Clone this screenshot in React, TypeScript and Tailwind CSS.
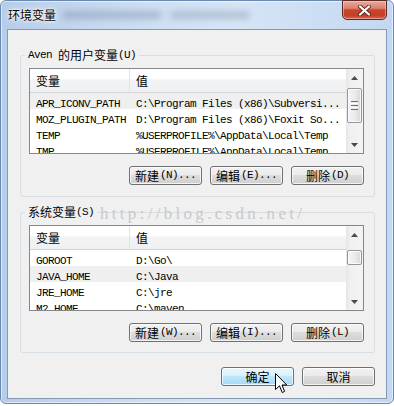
import React from "react";

const MONO = "font-['Liberation_Mono',monospace] text-[11px] tracking-[-0.6px]";
const CJK = "font-['Noto_Sans_CJK_SC',sans-serif] text-[12px]";

type Row = { name: string; value: string; hl?: boolean };

const userRows: Row[] = [
  { name: "APR_ICONV_PATH", value: "C:\\Program Files (x86)\\Subversi...", hl: true },
  { name: "MOZ_PLUGIN_PATH", value: "D:\\Program Files (x86)\\Foxit So..." },
  { name: "TEMP", value: "%USERPROFILE%\\AppData\\Local\\Temp" },
  { name: "TMP", value: "%USERPROFILE%\\AppData\\Local\\Temp" },
];

const sysRows: Row[] = [
  { name: "GOROOT", value: "D:\\Go\\" },
  { name: "JAVA_HOME", value: "C:\\Java", hl: true },
  { name: "JRE_HOME", value: "C:\\jre" },
  { name: "M2_HOME", value: "C:\\maven" },
];

function ScrollArrow({ down }: { down?: boolean }) {
  return (
    <div className="h-[17px] shrink-0 flex items-center justify-center">
      <svg width="7" height="4" viewBox="0 0 7 4">
        <polygon points={down ? "0,0 7,0 3.5,4" : "0,4 7,4 3.5,0"} fill="#4a4a4a" />
      </svg>
    </div>
  );
}

function Scrollbar({ thumbClass, grip }: { thumbClass: string; grip?: boolean }) {
  return (
    <div className="w-[17px] shrink-0 flex flex-col bg-[linear-gradient(to_right,#e6e6e6,#f0f0f0_25%,#f4f4f4)]">
      <ScrollArrow />
      <div className="flex-1 flex flex-col items-center">
        <div
          className={`${thumbClass} w-[15px] rounded-[2px] border border-[#979797] bg-[linear-gradient(to_right,#f5f5f5,#ebebeb_50%,#d8d8d8)] shadow-[inset_0_0_0_1px_rgba(255,255,255,0.75)] flex flex-col items-center justify-center gap-[1px]`}
        >
          {grip && (
            <>
              <div className="w-[7px] h-[1px] bg-[#6f6f6f]" />
              <div className="w-[7px] h-[1px] bg-[#ffffff]" />
              <div className="w-[7px] h-[1px] bg-[#6f6f6f]" />
              <div className="w-[7px] h-[1px] bg-[#ffffff]" />
              <div className="w-[7px] h-[1px] bg-[#6f6f6f]" />
            </>
          )}
        </div>
      </div>
      <ScrollArrow down />
    </div>
  );
}

function List({ rows, thumbClass, grip }: { rows: Row[]; thumbClass: string; grip?: boolean }) {
  return (
    <div className="h-[86px] border border-[#828790] bg-white flex overflow-hidden text-black">
      <div className="flex-1 min-w-0 flex flex-col">
        <div className="h-[24px] shrink-0 flex border-b border-[#d5d5d5] bg-[linear-gradient(to_bottom,#ffffff_0%,#ffffff_45%,#f2f3f5_46%,#eff0f2_100%)]">
          <div className="w-[100px] border-r border-[#e3e3e3] pl-[6px] flex items-center">
            <span className={CJK}>变量</span>
          </div>
          <div className="flex-1 pl-[6px] flex items-center">
            <span className={CJK}>值</span>
          </div>
        </div>
        {rows.map((r) => (
          <div
            key={r.name}
            className={`h-[16px] shrink-0 flex items-center whitespace-nowrap ${r.hl ? "bg-[#efefef]" : ""}`}
          >
            <div className="w-[100px] pl-[6px] overflow-hidden">
              <span className={MONO}>{r.name}</span>
            </div>
            <div className="flex-1 pl-[6px] overflow-hidden">
              <span className={MONO}>{r.value}</span>
            </div>
          </div>
        ))}
      </div>
      <Scrollbar thumbClass={thumbClass} grip={grip} />
    </div>
  );
}

function Btn({ cjk, mono, primary }: { cjk: string; mono?: string; primary?: boolean }) {
  return (
    <button
      className={`h-[19px] w-[73px] rounded-[3px] border ${
        primary
          ? "border-[#3c7fb1] bg-[linear-gradient(to_bottom,#eaf6fd_0%,#d9f0fc_45%,#bee6fd_50%,#a7d9f5_100%)]"
          : "border-[#707070] bg-[linear-gradient(to_bottom,#f2f2f2_0%,#ebebeb_45%,#dddddd_50%,#cfcfcf_100%)]"
      } shadow-[inset_0_0_0_1px_rgba(255,255,255,0.75)] flex items-center justify-center text-black leading-none`}
    >
      <span className={CJK}>{cjk}</span>
      {mono && <span className={`${MONO} ml-[1px]`}>{mono}</span>}
    </button>
  );
}

function Legend({ latin, cjk, key2 }: { latin?: string; cjk: string; key2: string }) {
  return (
    <legend className="-ml-[4px] px-[3px] h-[14px] flex items-center text-black whitespace-pre">
      {latin && <span className={MONO}>{latin}</span>}
      <span className={CJK}>{cjk}</span>
      <span className={MONO}>{key2}</span>
    </legend>
  );
}

export default function App() {
  return (
    <div className="relative w-[394px] h-[406px] bg-white overflow-hidden">
      <div className="h-[404px] rounded-[6px] border border-[#6a89ae] bg-[linear-gradient(to_right,#b6cde9,#cfe0f4_40%,#d6e5f6_60%,#c3d8f0)] shadow-[inset_0_0_0_1px_rgba(255,255,255,0.55)] flex flex-col px-[6px] pb-[4px]">
        {/* Title bar */}
        <div className="h-[28px] shrink-0 flex items-start">
          <div className="h-[28px] pl-[1px] flex items-center">
            <span className={`${CJK} text-black [text-shadow:0_0_6px_#fff,0_0_3px_#fff,0_0_2px_#fff]`}>环境变量</span>
          </div>
          <div className="h-[28px] ml-[6px] flex items-center gap-[8px]">
            <div className="w-[100px] h-[8px] rounded-full bg-[#7f8ea3]/45 blur-[3px]" />
            <div className="w-[80px] h-[8px] rounded-full bg-[#7f8ea3]/40 blur-[3px]" />
          </div>
          <div className="flex-1" />
          <div className="-mt-[1px] w-[45px] h-[20px] rounded-b-[5px] border border-[#5d2a22] bg-[linear-gradient(to_bottom,#e9ab9f_0%,#dc8170_40%,#c8452b_50%,#c43f25_80%,#d46a50_100%)] shadow-[inset_0_0_0_1px_rgba(255,220,210,0.45)] flex items-center justify-center">
            <svg width="13" height="11" viewBox="0 0 13 11">
              <path d="M2 1.5 L11 9.5 M11 1.5 L2 9.5" stroke="#5a2a22" strokeWidth="4" strokeLinecap="round" />
              <path d="M2 1.5 L11 9.5 M11 1.5 L2 9.5" stroke="#ffffff" strokeWidth="2.2" strokeLinecap="round" />
            </svg>
          </div>
        </div>

        {/* Client area */}
        <div className="flex-1 border border-[#8599b3] bg-[#f0f0f0] pl-[12px] pr-[11px] flex flex-col">
          <fieldset className="mt-[18px] border border-[#d5dfe5] rounded-[3px] pl-[8px] pr-[10px] pt-[6px] pb-[11px]">
            <Legend latin="Aven " cjk="的用户变量" key2="(U)" />
            <List rows={userRows} thumbClass="mt-[2px] h-[35px]" grip />
            <div className="mt-[12px] flex justify-end gap-[8px]">
              <Btn cjk="新建" mono="(N)..." />
              <Btn cjk="编辑" mono="(E)..." />
              <Btn cjk="删除" mono="(D)" />
            </div>
          </fieldset>

          <fieldset className="mt-[8px] border border-[#d5dfe5] rounded-[3px] pl-[8px] pr-[10px] pt-[6px] pb-[10px]">
            <Legend cjk="系统变量" key2="(S)" />
            <List rows={sysRows} thumbClass="mt-[7px] h-[15px]" />
            <div className="mt-[12px] flex justify-end gap-[8px]">
              <Btn cjk="新建" mono="(W)..." />
              <Btn cjk="编辑" mono="(I)..." />
              <Btn cjk="删除" mono="(L)" />
            </div>
          </fieldset>

          <div className="mt-[14px] flex justify-end gap-[8px]">
            <Btn cjk="确定" primary />
            <Btn cjk="取消" />
          </div>
        </div>
      </div>

      {/* watermark */}
      <div className="absolute left-[100px] top-[204px] leading-[20px] font-['Liberation_Serif',serif] text-[17px] tracking-[3.3px] text-[#c9c9c9] pointer-events-none whitespace-nowrap">
        http://blog.csdn.net/
      </div>

      {/* mouse cursor */}
      <svg className="absolute left-[275px] top-[373px]" width="13" height="21" viewBox="0 0 13 21">
        <path
          d="M0.5 0.5 L0.5 16.5 L4.5 12.8 L7.2 19.5 L9.6 18.5 L7 12 L11.8 12 Z"
          fill="#ffffff"
          stroke="#000000"
          strokeWidth="1"
          strokeLinejoin="miter"
        />
      </svg>
    </div>
  );
}
